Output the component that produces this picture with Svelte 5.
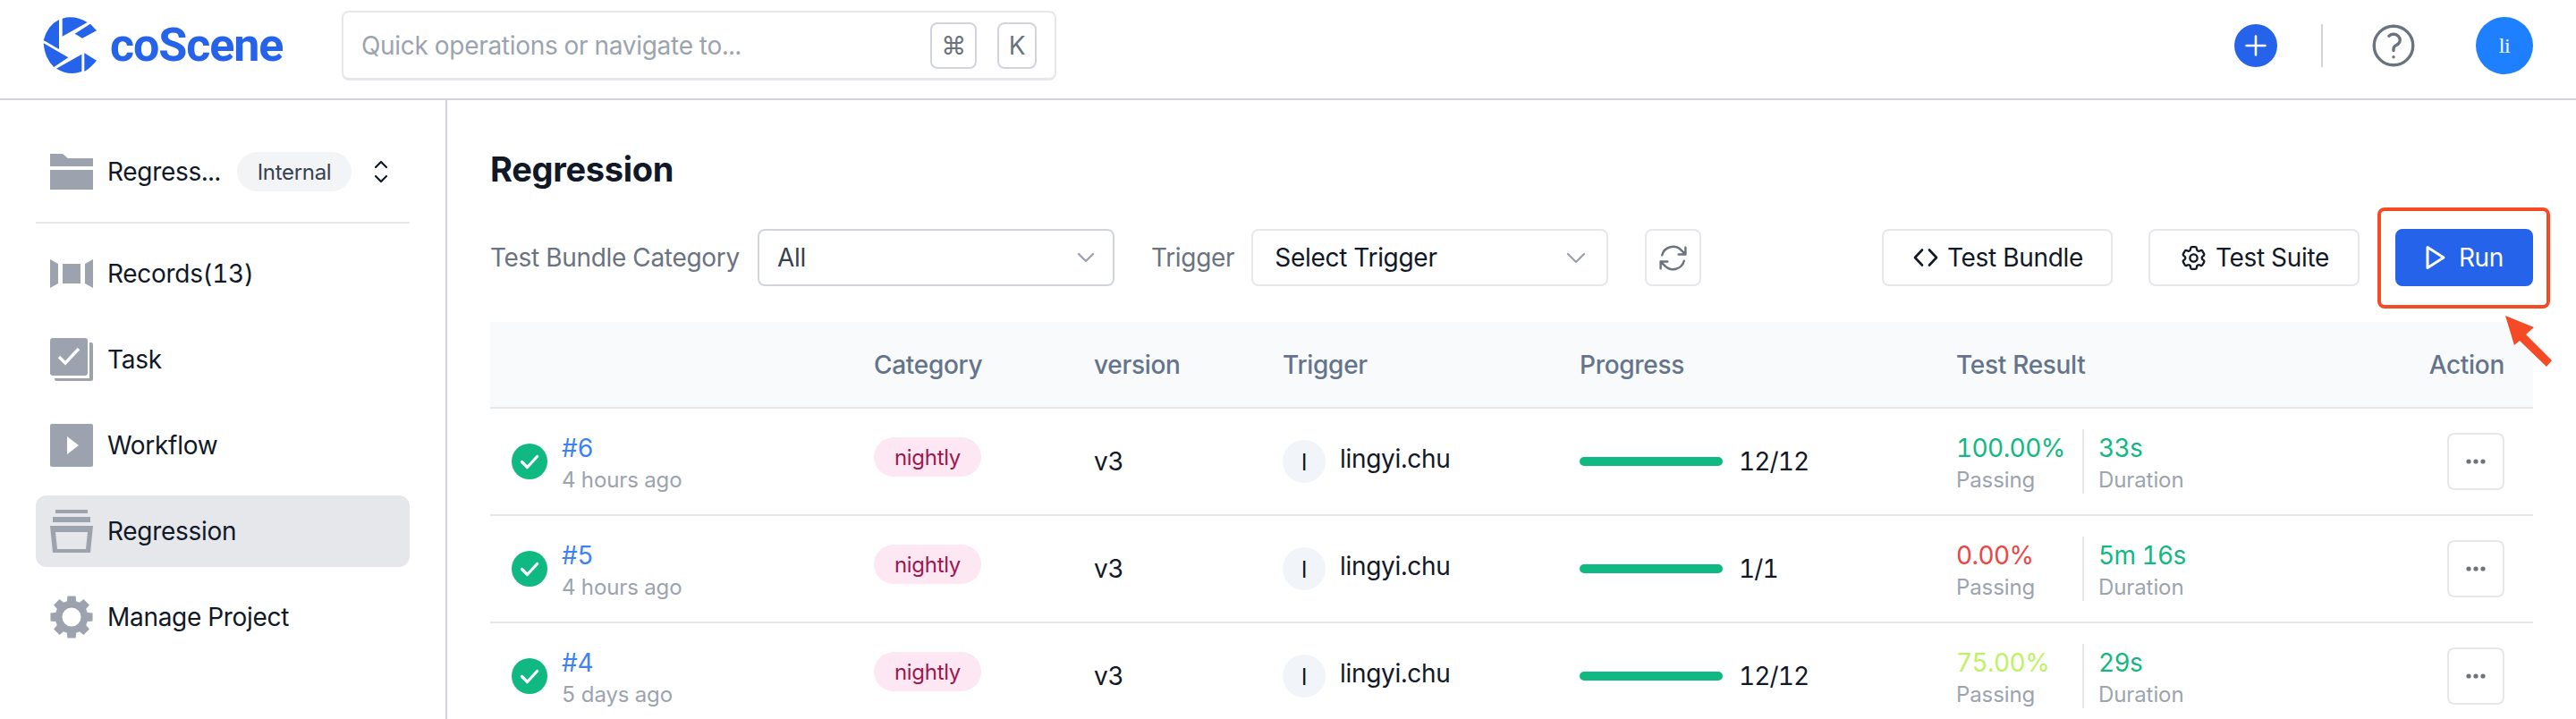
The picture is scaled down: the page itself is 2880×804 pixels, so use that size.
<script>
  const navItems = [
    { label: 'Records(13)', icon: 'records' },
    { label: 'Task', icon: 'task' },
    { label: 'Workflow', icon: 'workflow' },
    { label: 'Regression', icon: 'regression', active: true },
    { label: 'Manage Project', icon: 'manage' }
  ];

  const runs = [
    { id: '#6', when: '4 hours ago', progress: '12/12', pass: '100.00%', passClass: 'good', time: '33s' },
    { id: '#5', when: '4 hours ago', progress: '1/1', pass: '0.00%', passClass: 'bad', time: '5m 16s' },
    { id: '#4', when: '5 days ago', progress: '12/12', pass: '75.00%', passClass: 'mid', time: '29s' }
  ];

  // eight-tooth gear for the Manage Project entry
  function gearPath() {
    const pt = (deg, r) => {
      const a = (deg * Math.PI) / 180;
      return `${(24 + r * Math.sin(a)).toFixed(2)} ${(24 - r * Math.cos(a)).toFixed(2)}`;
    };
    let d = '';
    for (let i = 0; i < 8; i++) {
      const a = i * 45;
      d += `${i ? 'L' : 'M'}${pt(a - 16, 18.5)} L${pt(a - 11, 24)} L${pt(a + 11, 24)} L${pt(a + 16, 18.5)} `;
    }
    return d + 'Z M24 13.5a10.5 10.5 0 1 0 0 21 10.5 10.5 0 0 0 0-21z';
  }
  const gear = gearPath();
</script>

<div class="page">
  <header class="topbar">
    <div class="brand">
      <svg class="logo" viewBox="80 54 192 198" width="64" height="66" fill="#2563eb">
        <path d="M148 62Q190 50 232 75L148 122Z" />
        <path d="M242 80L263 103L215 128L190 113Z" />
        <path d="M137 66Q98 85 85 135L137 165Z" />
        <path d="M85 145L168 193L120 225Q88 195 85 145Z" />
        <path d="M128 230L213 182L213 240Q170 255 128 230Z" />
        <path d="M222 178L263 203Q240 230 222 240Z" />
      </svg>
      <span class="wordmark">coScene</span>
    </div>
    <div class="search">
      <span class="search-hint">Quick operations or navigate to...</span>
      <span class="keys">
        <kbd class="cmd">⌘</kbd>
        <kbd class="k">K</kbd>
      </span>
    </div>
    <div class="top-actions">
      <span class="plus">
        <svg viewBox="0 0 24 24" width="28" height="28" fill="none" stroke="#fff" stroke-width="2.2" stroke-linecap="round">
          <path d="M12 3v18M3 12h18" />
        </svg>
      </span>
      <span class="top-divider"></span>
      <svg class="help" viewBox="0 0 24 24" width="58" height="58" fill="none" stroke="#6b7280" stroke-width="1.4" stroke-linecap="round" stroke-linejoin="round">
        <path d="M9.879 7.519c1.171-1.025 3.071-1.025 4.242 0 1.172 1.025 1.172 2.687 0 3.712-.203.179-.43.326-.67.442-.745.361-1.45.999-1.45 1.827v.75M21 12a9 9 0 1 1-18 0 9 9 0 0 1 18 0Zm-9 5.25h.008v.008H12v-.008Z" />
      </svg>
      <span class="user">li</span>
    </div>
  </header>

  <div class="body">
    <aside class="sidebar">
      <div class="project">
        <svg class="nav-icon" viewBox="0 0 48 40" width="48" height="40" fill="#9ca3af">
          <path d="M0 0h14l6 5h28v9H0z" />
          <path d="M0 18h48v22H0z" />
        </svg>
        <span class="project-name">Regress...</span>
        <span class="internal">Internal</span>
        <svg class="updown" viewBox="0 0 16 26" width="16" height="26" fill="none" stroke="#111827" stroke-width="2.2" stroke-linecap="round" stroke-linejoin="round">
          <path d="M2 8l6-6 6 6M2 18l6 6 6-6" />
        </svg>
      </div>
      <nav class="nav">
        {#each navItems as item}
          <div class="nav-item" class:active={item.active}>
            {#if item.icon === 'records'}
              <svg class="nav-icon" viewBox="0 0 48 48" width="48" height="48" fill="#9ca3af">
                <path d="M0 8l9 5v22l-9 5z" />
                <path d="M14 13h20v22H14z" />
                <path d="M48 8l-9 5v22l9 5z" />
              </svg>
            {:else if item.icon === 'task'}
              <svg class="nav-icon" viewBox="0 0 48 48" width="48" height="48" fill="#9ca3af">
                <rect x="0" y="0" width="42" height="42" rx="3" />
                <path d="M44 5h2a2 2 0 0 1 2 2v39a2 2 0 0 1-2 2H7a2 2 0 0 1-2-2v-1h39z" />
                <path d="M10 21l7 7 15-16" fill="none" stroke="#fff" stroke-width="3.4" />
              </svg>
            {:else if item.icon === 'workflow'}
              <svg class="nav-icon" viewBox="0 0 48 48" width="48" height="48" fill="#9ca3af">
                <path fill-rule="evenodd" d="M2 0h44a2 2 0 0 1 2 2v44a2 2 0 0 1-2 2H2a2 2 0 0 1-2-2V2a2 2 0 0 1 2-2zM19 14v20l13-10z" />
              </svg>
            {:else if item.icon === 'regression'}
              <svg class="nav-icon" viewBox="0 0 48 48" width="48" height="48" fill="#9ca3af">
                <path d="M6 0h36v4H6z" />
                <path d="M3 8h42v6H3z" />
                <path fill-rule="evenodd" d="M0 18h48l-3 30H3zM6 25l2 19h32l2-19z" />
              </svg>
            {:else}
              <svg class="nav-icon" viewBox="0 0 48 48" width="48" height="48" fill="#9ca3af">
                <path fill-rule="evenodd" d={gear} />
              </svg>
            {/if}
            <span>{item.label}</span>
          </div>
        {/each}
      </nav>
    </aside>

    <main class="content">
      <h1>Regression</h1>
      <div class="toolbar">
        <span class="filter-label">Test Bundle Category</span>
        <div class="select select-all">
          <span>All</span>
          <svg viewBox="0 0 20 20" width="20" height="20" fill="none" stroke="#9ca3af" stroke-width="2.4" stroke-linecap="round" stroke-linejoin="round"><path d="M2 6l8 8 8-8" /></svg>
        </div>
        <span class="filter-label trigger-label">Trigger</span>
        <div class="select select-trigger">
          <span>Select Trigger</span>
          <svg viewBox="0 0 24 24" width="24" height="24" fill="none" stroke="#9ca3af" stroke-width="2.4" stroke-linecap="round" stroke-linejoin="round"><path d="M3 8l9 9 9-9" /></svg>
        </div>
        <button class="btn icon-btn" aria-label="refresh">
          <svg viewBox="0 0 24 24" width="37" height="37" fill="none" stroke="#6b7280" stroke-width="1.6" stroke-linecap="round" stroke-linejoin="round">
            <path d="M16.023 9.348h4.992v-.001M2.985 19.644v-4.992m0 0h4.992m-4.993 0 3.181 3.183a8.25 8.25 0 0 0 13.803-3.7M4.031 9.865a8.25 8.25 0 0 1 13.803-3.7l3.181 3.182m0-4.991v4.99" />
          </svg>
        </button>
        <span class="spacer"></span>
        <button class="btn bundle">
          <svg viewBox="0 0 28 20" width="28" height="20" fill="none" stroke="#111827" stroke-width="2.6" stroke-linecap="round" stroke-linejoin="round"><path d="M10 1.500L2 10l8 8.500M18 1.500l8 8.500-8 8.500" /></svg>
          Test Bundle
        </button>
        <button class="btn suite">
          <svg viewBox="0 0 24 24" width="33" height="33" fill="none" stroke="#111827" stroke-width="1.7" stroke-linecap="round" stroke-linejoin="round">
            <path d="M9.594 3.94c.09-.542.56-.94 1.11-.94h2.593c.55 0 1.02.398 1.11.94l.213 1.281c.063.374.313.686.645.87.074.04.147.083.22.127.325.196.72.257 1.075.124l1.217-.456a1.125 1.125 0 0 1 1.37.49l1.296 2.247a1.125 1.125 0 0 1-.26 1.431l-1.003.827c-.293.241-.438.613-.43.992a7.723 7.723 0 0 1 0 .255c-.008.378.137.75.43.991l1.004.827c.424.35.534.955.26 1.43l-1.298 2.247a1.125 1.125 0 0 1-1.369.491l-1.217-.456c-.355-.133-.75-.072-1.076.124a6.47 6.47 0 0 1-.22.128c-.331.183-.581.495-.644.869l-.213 1.281c-.09.543-.56.94-1.11.94h-2.594c-.55 0-1.019-.398-1.11-.94l-.213-1.281c-.062-.374-.312-.686-.644-.87a6.52 6.52 0 0 1-.22-.127c-.325-.196-.72-.257-1.076-.124l-1.217.456a1.125 1.125 0 0 1-1.369-.49l-1.297-2.247a1.125 1.125 0 0 1 .26-1.431l1.004-.827c.292-.24.437-.613.43-.991a6.932 6.932 0 0 1 0-.255c.007-.38-.138-.751-.43-.992l-1.004-.827a1.125 1.125 0 0 1-.26-1.43l1.297-2.247a1.125 1.125 0 0 1 1.37-.491l1.216.456c.356.133.751.072 1.076-.124.072-.044.146-.086.22-.128.332-.183.582-.495.644-.869l.214-1.28Z" />
            <circle cx="12" cy="12" r="3" />
          </svg>
          Test Suite
        </button>
        <div class="run-wrap">
          <button class="btn run">
            <svg viewBox="0 0 24 28" width="24" height="28" fill="none" stroke="#fff" stroke-width="3" stroke-linejoin="round"><path d="M3 2.500v23L21 14z" /></svg>
            Run
          </button>
          <span class="highlight"></span>
          <svg class="arrow" viewBox="0 0 54 58" width="54" height="58" fill="#f44a26">
            <path d="M0 0L32 13L23 21L52 50L46 57L16 28L10 33z" />
          </svg>
        </div>
      </div>

      <div class="table">
        <div class="row head">
          <span></span>
          <span>Category</span>
          <span>version</span>
          <span>Trigger</span>
          <span>Progress</span>
          <span>Test Result</span>
          <span class="action-head">Action</span>
        </div>
        {#each runs as run}
          <div class="row">
            <div class="run-cell">
              <svg viewBox="0 0 40 40" width="40" height="40">
                <circle cx="20" cy="20" r="20" fill="#10b981" />
                <path d="M11.500 20.500l6 6 11-12" fill="none" stroke="#fff" stroke-width="3.200" stroke-linecap="round" stroke-linejoin="round" />
              </svg>
              <div class="stack">
                <span class="run-id">{run.id}</span>
                <span class="muted">{run.when}</span>
              </div>
            </div>
            <div class="cat-cell"><span class="pill">nightly</span></div>
            <div>v3</div>
            <div class="trigger-cell">
              <span class="mini-avatar">l</span>
              <span class="trigger-name">lingyi.chu</span>
            </div>
            <div class="progress-cell">
              <span class="bar"></span>
              <span class="count">{run.progress}</span>
            </div>
            <div class="result-cell">
              <div class="stack pass-col">
                <span class="rate {run.passClass}">{run.pass}</span>
                <span class="muted">Passing</span>
              </div>
              <div class="stack duration-col">
                <span class="rate good">{run.time}</span>
                <span class="muted">Duration</span>
              </div>
            </div>
            <div class="action-cell">
              <button class="btn more" aria-label="more">
                <svg viewBox="0 0 24 8" width="24" height="8" fill="#6b7280"><circle cx="4" cy="4" r="2.600" /><circle cx="12" cy="4" r="2.600" /><circle cx="20" cy="4" r="2.600" /></svg>
              </button>
            </div>
          </div>
        {/each}
      </div>
    </main>
  </div>
</div>

<style>
  :global(html), :global(body) {
    margin: 0;
    background: #fff;
    overflow: hidden;
  }

  .page {
    width: 2880px;
    height: 804px;
    overflow: hidden;
    font-family: Inter, "Liberation Sans", sans-serif;
    font-size: 28px;
    letter-spacing: -0.3px;
    font-variant-numeric: tabular-nums;
    color: #111827;
  }

  .topbar {
    height: 102px;
    padding-bottom: 8px;
    border-bottom: 2px solid #d1d5db;
    display: flex;
    align-items: center;
  }

  .brand {
    display: flex;
    align-items: center;
    gap: 12px;
    width: 335px;
    padding-left: 47px;
  }

  .logo {
    flex: none;
  }

  .wordmark {
    font-family: Roboto, sans-serif;
    font-size: 52px;
    font-weight: 700;
    color: #2563eb;
    letter-spacing: -1.1px;
    line-height: 64px;
  }

  .search {
    width: 799px;
    height: 78px;
    box-sizing: border-box;
    border: 2px solid #e5e7eb;
    border-bottom-width: 3px;
    border-radius: 8px;
    display: flex;
    align-items: center;
    justify-content: space-between;
    padding: 0 20px;
  }

  .search-hint {
    color: #9ca3af;
  }

  .keys {
    display: flex;
    gap: 23px;
  }

  kbd {
    height: 52px;
    box-sizing: border-box;
    border: 2px solid #d1d5db;
    border-radius: 8px;
    display: flex;
    align-items: center;
    justify-content: center;
    font-family: inherit;
    font-size: 28px;
    color: #6b7280;
  }

  .cmd {
    width: 52px;
  }

  .k {
    width: 44px;
  }

  .top-actions {
    margin-left: auto;
    display: flex;
    align-items: center;
    padding-right: 48px;
  }

  .plus {
    width: 48px;
    height: 48px;
    border-radius: 50%;
    background: #2563eb;
    display: flex;
    align-items: center;
    justify-content: center;
  }

  .top-divider {
    width: 2px;
    height: 48px;
    background: #d1d5db;
    margin: 0 50px 0 49px;
  }

  .help {
    margin-right: 63px;
  }

  .user {
    width: 64px;
    height: 64px;
    border-radius: 50%;
    background: #1e80ff;
    color: #fff;
    font-family: "Liberation Serif", serif;
    font-size: 24px;
    display: flex;
    align-items: center;
    justify-content: center;
  }

  .body {
    display: flex;
  }

  .sidebar {
    width: 418px;
    height: 692px;
    flex: none;
    border-right: 2px solid #d1d5db;
    padding: 48px 40px 0;
    box-sizing: content-box;
  }

  .project {
    height: 64px;
    padding: 0 16px 24px;
    display: flex;
    align-items: center;
    border-bottom: 2px solid #e5e7eb;
  }

  .nav-icon {
    flex: none;
    margin-right: 16px;
  }

  .project-name {
    width: 145px;
    white-space: nowrap;
  }

  .internal {
    background: #f3f4f6;
    color: #374151;
    font-size: 24px;
    height: 44px;
    width: 128px;
    box-sizing: border-box;
    justify-content: center;
    border-radius: 22px;
    display: flex;
    align-items: center;
  }

  .updown {
    margin-left: 25px;
  }

  .nav {
    display: flex;
    flex-direction: column;
    gap: 16px;
    margin-top: 16px;
  }

  .nav-item {
    height: 80px;
    padding: 0 16px;
    border-radius: 12px;
    display: flex;
    align-items: center;
  }

  .nav-item.active {
    background: #e5e7eb;
  }

  .content {
    flex: 1;
    min-width: 0;
    padding: 0 48px;
  }

  h1 {
    margin: 55px 0 0;
    font-size: 38px;
    line-height: 44px;
    font-weight: 700;
    color: #111827;
  }

  .toolbar {
    display: flex;
    align-items: center;
    margin-top: 45px;
    height: 64px;
  }

  .filter-label {
    color: #6b7280;
    margin-right: 20px;
  }

  .trigger-label {
    margin-left: 41px;
    margin-right: 19px;
  }

  .select {
    height: 64px;
    box-sizing: border-box;
    border: 2px solid #d1d5db;
    border-radius: 8px;
    display: flex;
    align-items: center;
    justify-content: space-between;
    padding: 0 20px;
    color: #374151;
  }

  .select-all {
    width: 399px;
  }

  .select-trigger {
    width: 399px;
    padding: 0 22px 0 24px;
    border-color: #e5e7eb;
    color: #111827;
  }

  .btn {
    height: 64px;
    box-sizing: border-box;
    border: 2px solid #e5e7eb;
    border-radius: 8px;
    background: #fff;
    display: flex;
    align-items: center;
    justify-content: center;
    font: inherit;
    letter-spacing: inherit;
    color: #111827;
    padding: 0;
    gap: 8px;
  }

  .icon-btn {
    width: 63px;
    margin-left: 41px;
    flex: none;
  }

  .spacer {
    flex: 1;
  }

  .bundle {
    width: 258px;
    gap: 10px;
    padding-left: 2px;
  }

  .suite {
    width: 236px;
    margin-left: 40px;
    gap: 8px;
  }

  .run-wrap {
    position: relative;
    margin-left: 40px;
  }

  .run {
    width: 154px;
    background: #2563eb;
    border-color: #2563eb;
    color: #fff;
    gap: 14px;
  }

  .highlight {
    position: absolute;
    left: -20px;
    top: -24px;
    width: 193px;
    height: 113px;
    box-sizing: border-box;
    border: 4px solid #f44a26;
    border-radius: 8px;
  }

  .arrow {
    position: absolute;
    left: 123px;
    top: 97px;
    z-index: 2;
  }

  .table {
    margin-top: 40px;
  }

  .row {
    display: grid;
    grid-template-columns: 429px 246px 211px 332px 421px 1fr 64px;
    align-items: center;
    height: 118px;
    border-bottom: 2px solid #e5e7eb;
    padding-right: 32px;
    color: #111827;
  }

  .row.head {
    height: 95px;
    background: #f8fafc;
    color: #64748b;
    font-weight: 500;
  }

  .action-head {
    justify-self: end;
    white-space: nowrap;
  }

  .run-cell {
    display: flex;
    align-items: center;
    gap: 16px;
    padding-left: 24px;
  }

  .stack {
    display: flex;
    flex-direction: column;
  }

  .run-id {
    color: #3b82f6;
    line-height: 42px;
  }

  .muted {
    color: #9ca3af;
    font-size: 24px;
    line-height: 30px;
    letter-spacing: -0.1px;
  }

  .cat-cell {
    display: flex;
    margin-top: -10px;
  }

  .pill {
    display: flex;
    align-items: center;
    justify-content: center;
    height: 44px;
    width: 120px;
    border-radius: 22px;
    background: #fce7f3;
    color: #9d174d;
    font-size: 24px;
  }

  .trigger-cell {
    display: flex;
    align-items: center;
    gap: 16px;
  }

  .mini-avatar {
    width: 48px;
    height: 48px;
    border-radius: 50%;
    background: #f1f5f9;
    display: flex;
    align-items: center;
    justify-content: center;
    font-size: 26px;
  }

  .trigger-name {
    margin-top: -6px;
  }

  .progress-cell {
    display: flex;
    align-items: center;
    gap: 18px;
  }

  .count {
    letter-spacing: -0.9px;
  }

  .bar {
    width: 160px;
    height: 10px;
    border-radius: 5px;
    background: #10b981;
  }

  .result-cell {
    display: flex;
    align-items: stretch;
  }

  .pass-col {
    width: 141px;
  }

  .duration-col {
    border-left: 2px solid #e5e7eb;
    padding-left: 16px;
  }

  .rate {
    line-height: 42px;
    letter-spacing: -0.6px;
  }

  .good {
    color: #10b981;
  }

  .bad {
    color: #ef4444;
  }

  .mid {
    color: #bef264;
  }

  .action-cell {
    display: flex;
    justify-content: flex-end;
  }

  .more {
    width: 64px;
  }
</style>
